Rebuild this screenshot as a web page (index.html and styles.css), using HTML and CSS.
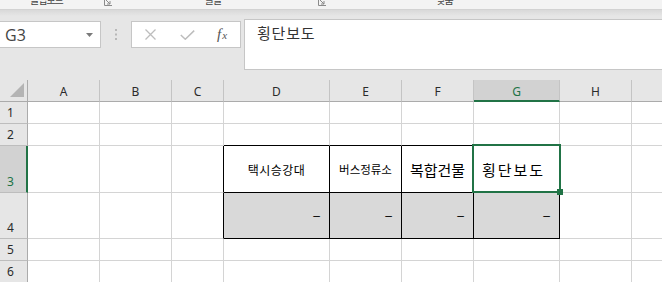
FILE: index.html
```html
<!DOCTYPE html>
<html lang="ko">
<head>
<meta charset="utf-8">
<title>Excel</title>
<link rel="stylesheet" href="styles.css">
</head>
<body>
<div class="ribbon">
  <span class="rlabel l-clip">클립보드</span>
  <svg class="launch l-1" width="8" height="8" viewBox="0 0 8 8"><path d="M0.5 0v7.5H8" stroke="#8a8a8a" fill="none"/><path d="M2 2l4 4M6 3v3H3" stroke="#8a8a8a" fill="none"/></svg>
  <span class="rlabel l-font">글꼴</span>
  <svg class="launch l-2" width="8" height="8" viewBox="0 0 8 8"><path d="M0.5 0v7.5H8" stroke="#8a8a8a" fill="none"/><path d="M2 2l4 4M6 3v3H3" stroke="#8a8a8a" fill="none"/></svg>
  <span class="rlabel l-align">맞춤</span>
</div>
<div class="fbar">
  <div class="namebox">
    <span class="ref">G3</span>
    <svg class="dd" width="7" height="4" viewBox="0 0 7 4"><path d="M0 0h7L3.5 4z" fill="#7a7a7a"/></svg>
  </div>
  <svg class="dots" width="2" height="11" viewBox="0 0 2 11"><rect x="0" y="0" width="2" height="2" fill="#b8b8b8"/><rect x="0" y="4.5" width="2" height="2" fill="#b8b8b8"/><rect x="0" y="9" width="2" height="2" fill="#b8b8b8"/></svg>
  <div class="fbtns">
    <svg class="ic-x" width="11" height="11" viewBox="0 0 11 11"><path d="M0.5 0.5l10 10M10.5 0.5l-10 10" stroke="#bdbdbd" stroke-width="1.3" fill="none"/></svg>
    <svg class="ic-ok" width="15" height="10" viewBox="0 0 15 10"><path d="M0.8 5l4.5 4.2L14.2 0.6" stroke="#bdbdbd" stroke-width="1.5" fill="none"/></svg>
    <span class="fx"><span class="fx-f">f</span><span class="fx-x">x</span></span>
  </div>
  <div class="finput">횡단보도</div>
</div>
<div class="sheet">
  <div class="ch corner"><svg width="14" height="14" viewBox="0 0 14 14"><path d="M14 0V14H0z" fill="#b4b4b4"/></svg></div>
  <div class="ch">A</div>
  <div class="ch">B</div>
  <div class="ch">C</div>
  <div class="ch">D</div>
  <div class="ch">E</div>
  <div class="ch">F</div>
  <div class="ch ch-sel">G</div>
  <div class="ch">H</div>
  <div class="ch ch-last"></div>

  <div class="rh">1</div>
  <div class="c"></div><div class="c"></div><div class="c"></div><div class="c"></div><div class="c"></div><div class="c"></div><div class="c"></div><div class="c"></div><div class="c"></div>

  <div class="rh">2</div>
  <div class="c"></div><div class="c"></div><div class="c"></div>
  <div class="c tt"></div><div class="c tt"></div><div class="c tt"></div><div class="c tt"></div>
  <div class="c"></div><div class="c"></div>

  <div class="rh rh-sel">3</div>
  <div class="c"></div><div class="c"></div><div class="c bl"></div>
  <div class="c tb head"><span class="t12">택시승강대</span></div>
  <div class="c tb head"><span class="t11">버스정류소</span></div>
  <div class="c tb head"><span class="t15">복합건물</span></div>
  <div class="c tb head active"><span class="t15 wide">횡단보도</span></div>
  <div class="c"></div><div class="c"></div>

  <div class="rh">4</div>
  <div class="c"></div><div class="c"></div><div class="c bl"></div>
  <div class="c tb gr num">–</div>
  <div class="c tb gr num">–</div>
  <div class="c tb gr num">–</div>
  <div class="c tb gr num">–</div>
  <div class="c"></div><div class="c"></div>

  <div class="rh">5</div>
  <div class="c"></div><div class="c"></div><div class="c"></div><div class="c"></div><div class="c"></div><div class="c"></div><div class="c"></div><div class="c"></div><div class="c"></div>

  <div class="rh">6</div>
  <div class="c"></div><div class="c"></div><div class="c"></div><div class="c"></div><div class="c"></div><div class="c"></div><div class="c"></div><div class="c"></div><div class="c"></div>
</div>
</body>
</html>
```

FILE: styles.css
```css
* { box-sizing: border-box; }

html, body {
  margin: 0;
  padding: 0;
  width: 662px;
  height: 282px;
  overflow: hidden;
  background: #e6e6e6;
  font-family: "Noto Sans", "Noto Sans CJK KR", sans-serif;
}

/* ribbon strip (cut off at top) */
.ribbon {
  height: 10px;
  background: #f3f3f3;
  border-bottom: 1px solid #d2d2d2;
  display: flex;
  align-items: flex-end;
  overflow: hidden;
}
.rlabel {
  font-family: "Noto Sans CJK KR", sans-serif;
  font-size: 10px;
  letter-spacing: -1px;
  line-height: 12px;
  color: #444;
  margin-bottom: 3px;
  white-space: nowrap;
}
.launch { flex: none; margin-bottom: 3px; }
.l-clip { margin-left: 30px; }
.l-1 { margin-left: 41px; }
.l-font { margin-left: 93px; }
.l-2 { margin-left: 97px; }
.l-align { margin-left: 110px; }

/* formula bar */
.fbar {
  height: 70px;
  display: flex;
  align-items: flex-start;
  background: linear-gradient(to bottom, #d9d9d9 0, #e6e6e6 6px);
}
.namebox {
  margin-top: 11px;
  margin-left: -1px;
  width: 102px;
  height: 27px;
  background: #fff;
  border: 1px solid #c6c6c6;
  display: flex;
  align-items: center;
  justify-content: space-between;
  padding: 0 7px 0 5px;
}
.ref {
  font-family: "Open Sans", sans-serif;
  font-size: 16px;
  color: #444;
  line-height: 20px;
}
.dd { flex: none; }
.dots {
  flex: none;
  margin-top: 19px;
  margin-left: 14px;
}
.fbtns {
  margin-top: 11px;
  margin-left: 14px;
  width: 110px;
  height: 27px;
  background: #fff;
  border: 1px solid #c6c6c6;
  display: flex;
  align-items: center;
  padding-left: 13px;
}
.ic-x { flex: none; margin-top: -1px; }
.ic-ok { flex: none; margin-left: 24px; margin-top: 1px; }
.fx {
  margin-left: 22px;
  font-family: "Liberation Serif", serif;
  font-style: italic;
  color: #555;
  line-height: 14px;
  display: flex;
  align-items: baseline;
}
.fx-f { font-size: 15px; }
.fx-x { font-size: 11px; margin-left: 1px; }
.finput {
  margin-top: 9px;
  margin-left: 3px;
  margin-right: -4px;
  flex: 1;
  height: 51px;
  background: #fff;
  border: 1px solid #c6c6c6;
  padding: 3px 0 0 12px;
  font-family: "Noto Sans CJK KR", sans-serif;
  font-size: 15px;
  letter-spacing: 0.8px;
  line-height: 20px;
  color: #333;
}

/* sheet grid */
.sheet {
  display: grid;
  grid-template-columns: 28px 72px 72px 52px 106px 72px 72px 86px 72px 40px;
  grid-template-rows: 22px 22px 22px 47px 46px 22px 22px;
}
.ch {
  background: #e6e6e6;
  border-right: 1px solid #c4c4c4;
  border-bottom: 1px solid #ababab;
  display: flex;
  align-items: center;
  justify-content: center;
  font-family: "Noto Sans", sans-serif;
  font-size: 12px;
  color: #2b2b2b;
  padding-top: 2px;
}
.ch.corner {
  border-right-color: #ababab;
  justify-content: flex-end;
  align-items: flex-end;
  padding: 0 3px 4px 0;
}
.ch.corner svg { display: block; }
.ch-sel {
  background: #d2d2d2;
  color: #217346;
  border-bottom: 2px solid #217346;
  padding-top: 3px;
}
.ch-last { border-right: none; }

.rh {
  background: #e6e6e6;
  border-right: 1px solid #ababab;
  border-bottom: 1px solid #bdbdbd;
  display: flex;
  align-items: flex-end;
  padding: 0 0 2px 7px;
  font-family: "Noto Sans", sans-serif;
  font-size: 12px;
  line-height: 16px;
  color: #2b2b2b;
}
.rh-sel {
  background: #d2d2d2;
  color: #217346;
  border-right: 2px solid #217346;
}

.c {
  background: #fff;
  border-right: 1px solid #d4d4d4;
  border-bottom: 1px solid #d4d4d4;
}
.c.tt { border-bottom-color: #000; }
.c.bl { border-right-color: #000; }
.c.tb { border-right-color: #000; border-bottom-color: #000; }
.c.gr { background: #d9d9d9; }

.head {
  display: flex;
  align-items: center;
  justify-content: center;
  font-family: "Noto Sans CJK KR", sans-serif;
  color: #000;
  white-space: nowrap;
}
.t12 { font-size: 12px; letter-spacing: 0.5px; }
.t11 { font-size: 11.5px; }
.t15 { font-size: 15px; }
.t15.wide { letter-spacing: 2px; margin-right: 6px; }

.num {
  display: flex;
  align-items: center;
  justify-content: flex-end;
  padding-right: 9px;
  font-family: "Liberation Sans", sans-serif;
  font-size: 12px;
  color: #000;
}

.active { position: relative; }
.active::after {
  content: "";
  position: absolute;
  left: -2px;
  top: -2px;
  right: -2px;
  bottom: -1px;
  border: 2px solid #217346;
}
.active::before {
  content: "";
  position: absolute;
  right: -4px;
  bottom: -3px;
  width: 6px;
  height: 6px;
  background: #217346;
  z-index: 1;
}
```
